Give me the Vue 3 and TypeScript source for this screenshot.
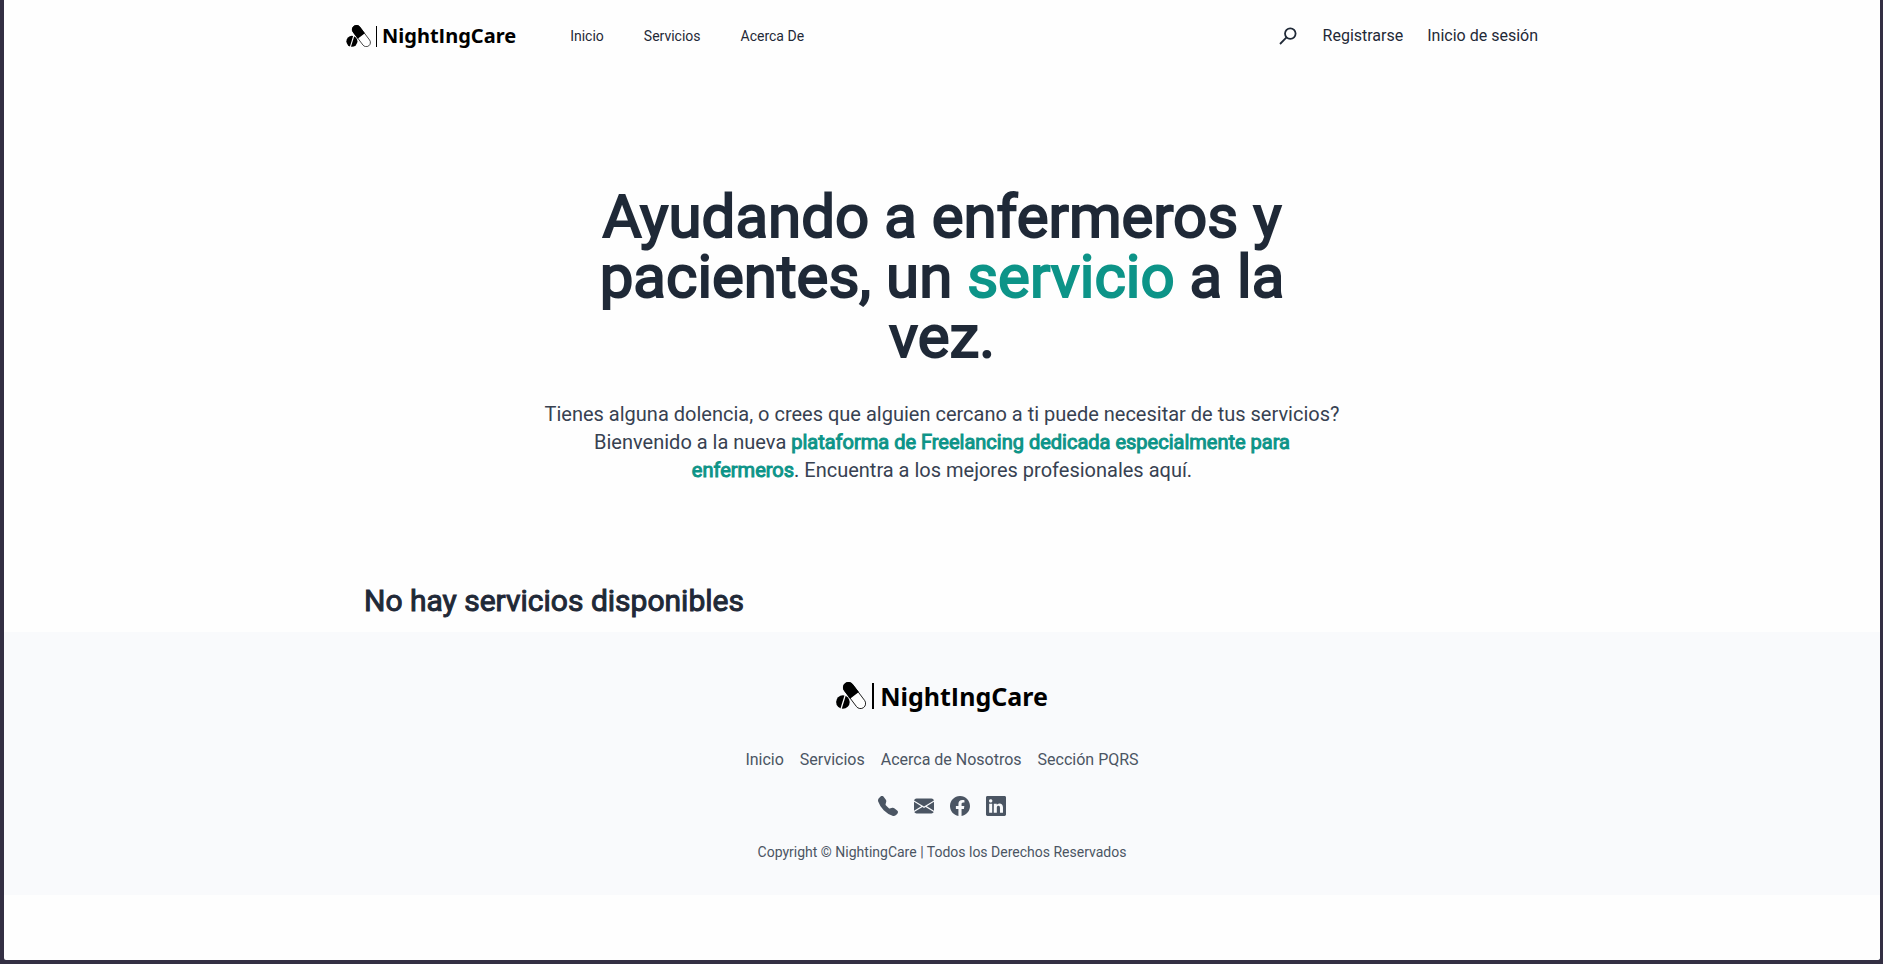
<script setup lang="ts">
interface NavLink {
  label: string
  href: string
}

interface SocialLink {
  label: string
  href: string
  path: string
}

const mainLinks: NavLink[] = [
  { label: 'Inicio', href: '#inicio' },
  { label: 'Servicios', href: '#servicios' },
  { label: 'Acerca De', href: '#acerca' },
]

const accountLinks: NavLink[] = [
  { label: 'Registrarse', href: '#registro' },
  { label: 'Inicio de sesión', href: '#sesion' },
]

const footerLinks: NavLink[] = [
  { label: 'Inicio', href: '#inicio' },
  { label: 'Servicios', href: '#servicios' },
  { label: 'Acerca de Nosotros', href: '#acerca' },
  { label: 'Sección PQRS', href: '#pqrs' },
]

const socialLinks: SocialLink[] = [
  {
    label: 'Teléfono',
    href: '#telefono',
    path: 'M1.885.511a1.745 1.745 0 0 1 2.61.163L6.29 2.98c.329.423.445.974.315 1.494l-.547 2.19a.68.68 0 0 0 .178.643l2.457 2.457a.68.68 0 0 0 .644.178l2.189-.547a1.75 1.75 0 0 1 1.494.315l2.306 1.794c.829.645.905 1.87.163 2.611l-1.034 1.034c-.74.74-1.846 1.065-2.877.702a18.6 18.6 0 0 1-7.01-4.42 18.6 18.6 0 0 1-4.42-7.009c-.362-1.03-.037-2.137.703-2.877z',
  },
  {
    label: 'Correo',
    href: '#correo',
    path: 'M.05 3.555A2 2 0 0 1 2 2h12a2 2 0 0 1 1.95 1.555L8 8.414zM0 4.697v7.104l5.803-3.558zM6.761 8.83l-6.57 4.027A2 2 0 0 0 2 14h12a2 2 0 0 0 1.808-1.144l-6.57-4.027L8 9.586zm3.436-.586L16 11.801V4.697z',
  },
  {
    label: 'Facebook',
    href: '#facebook',
    path: 'M16 8.049c0-4.446-3.582-8.05-8-8.05C3.58 0-.002 3.603-.002 8.05c0 4.017 2.926 7.347 6.75 7.951v-5.625h-2.03V8.05H6.75V6.275c0-2.017 1.195-3.131 3.022-3.131.876 0 1.791.157 1.791.157v1.98h-1.009c-.993 0-1.303.621-1.303 1.258v1.51h2.218l-.354 2.326H9.25V16c3.824-.604 6.75-3.934 6.75-7.951',
  },
  {
    label: 'LinkedIn',
    href: '#linkedin',
    path: 'M0 1.146C0 .513.526 0 1.175 0h13.65C15.474 0 16 .513 16 1.146v13.708c0 .633-.526 1.146-1.175 1.146H1.175C.526 16 0 15.487 0 14.854zm4.943 12.248V6.169H2.542v7.225zm-1.2-8.212c.837 0 1.358-.554 1.358-1.248-.015-.709-.52-1.248-1.342-1.248S2.4 3.226 2.4 3.934c0 .694.521 1.248 1.327 1.248zm4.908 8.212V9.359c0-.216.016-.432.08-.586.173-.431.568-.878 1.232-.878.869 0 1.216.662 1.216 1.634v3.865h2.401V9.25c0-2.22-1.184-3.252-2.764-3.252-1.274 0-1.845.7-2.165 1.193v.025h-.016l.016-.025V6.169h-2.4c.03.678 0 7.225 0 7.225z',
  },
]
</script>

<template>
  <div class="page">
    <header class="header">
      <a class="brand" href="#inicio">
        <svg class="brand-mark" viewBox="0 0 30 27" aria-hidden="true">
          <circle cx="6.9" cy="20" r="6.8" />
          <path d="M9.4 12.6 5 27" stroke="#fff" stroke-width="1.3" />
          <g transform="rotate(-37 18.5 13.5)">
            <rect x="13.4" y="-1.6" width="10.2" height="30.2" rx="5.1" fill="#fff" stroke="#000" stroke-width="0.8" />
            <path d="M13 13.4V3.5a5.5 5.5 0 0 1 11 0v9.9z" />
          </g>
        </svg>
        <span class="brand-bar"></span>
        <span class="brand-name">Night<span class="brand-capital">I</span>ngCare</span>
      </a>
      <nav class="main-nav" aria-label="Principal">
        <a v-for="link in mainLinks" :key="link.label" :href="link.href">{{ link.label }}</a>
      </nav>
      <div class="account">
        <button class="search" type="button" aria-label="Buscar">
          <svg viewBox="0 0 18 18" aria-hidden="true">
            <circle cx="11.3" cy="6.6" r="5.3" />
            <path d="M7.5 10.4 1 17" />
          </svg>
        </button>
        <a v-for="link in accountLinks" :key="link.label" :href="link.href">{{ link.label }}</a>
      </div>
    </header>

    <main>
      <section class="hero">
        <h1>Ayudando a enfermeros y pacientes, un <span class="accent">servicio</span> a la vez.</h1>
        <p>
          Tienes alguna dolencia, o crees que alguien cercano a ti puede necesitar de tus servicios?
          Bienvenido a la nueva
          <strong>plataforma de Freelancing dedicada especialmente para enfermeros</strong>. Encuentra a
          los mejores profesionales aquí.
        </p>
      </section>
      <section class="services">
        <h2>No hay servicios disponibles</h2>
      </section>
    </main>

    <footer class="footer">
      <a class="brand brand-large" href="#inicio">
        <svg class="brand-mark" viewBox="0 0 30 27" aria-hidden="true">
          <circle cx="6.9" cy="20" r="6.8" />
          <path d="M9.4 12.6 5 27" stroke="#fff" stroke-width="1.3" />
          <g transform="rotate(-37 18.5 13.5)">
            <rect x="13.4" y="-1.6" width="10.2" height="30.2" rx="5.1" fill="#fff" stroke="#000" stroke-width="0.8" />
            <path d="M13 13.4V3.5a5.5 5.5 0 0 1 11 0v9.9z" />
          </g>
        </svg>
        <span class="brand-bar"></span>
        <span class="brand-name">Night<span class="brand-capital">I</span>ngCare</span>
      </a>
      <nav class="footer-nav" aria-label="Pie de página">
        <a v-for="link in footerLinks" :key="link.label" :href="link.href">{{ link.label }}</a>
      </nav>
      <div class="social">
        <a v-for="item in socialLinks" :key="item.label" :href="item.href" :aria-label="item.label">
          <svg viewBox="0 0 16 16" aria-hidden="true">
            <path :d="item.path" fill-rule="evenodd" />
          </svg>
        </a>
      </div>
      <p class="copyright">Copyright © NightingCare | Todos los Derechos Reservados</p>
    </footer>
  </div>
</template>

<style>
body {
  margin: 0;
  background: #332f43;
}
</style>

<style scoped>
.page {
  box-sizing: border-box;
  min-height: 100vh;
  border: solid #332f43;
  border-width: 0 3px 4px 4px;
  border-radius: 0 0 6px 6px;
  background: #fefefe;
  color: #1f2937;
  font-family: Roboto, 'Liberation Sans', sans-serif;
  font-size: 16px;
  line-height: 24px;
}

a {
  color: inherit;
  text-decoration: none;
}

.header {
  display: flex;
  align-items: center;
  box-sizing: border-box;
  max-width: 1192px;
  height: 72px;
  margin: 0 auto;
}

.brand {
  display: flex;
  align-items: center;
  color: #000;
}

.brand-mark {
  width: 25px;
  height: 22px;
}

.brand-bar {
  width: 1px;
  height: 21px;
  margin: 0 5px 0 5px;
  background: #000;
}

.brand-name {
  font-family: 'Noto Sans', sans-serif;
  font-size: 20px;
  font-weight: 700;
  line-height: 24px;
}

.brand-capital {
  font-family: 'Open Sans', sans-serif;
}

.brand-large .brand-mark {
  width: 30px;
  height: 27px;
}

.brand-large .brand-bar {
  width: 2px;
  height: 26px;
  margin: 0 6px;
}

.brand-large .brand-name {
  font-size: 25px;
  line-height: 24px;
}

.main-nav {
  display: flex;
  gap: 40px;
  margin-left: 54px;
  font-size: 14px;
  line-height: 20px;
}

.account {
  display: flex;
  align-items: center;
  gap: 24px;
  margin-left: auto;
}

.search {
  display: flex;
  margin-right: 2px;
  padding: 0;
  border: 0;
  background: none;
  cursor: pointer;
}

.search svg {
  width: 18px;
  height: 18px;
  fill: none;
  stroke: #1f2937;
  stroke-width: 1.8;
}

.hero {
  max-width: 800px;
  margin: 0 auto;
  padding: 115px 0 99px;
  text-align: center;
}

h1,
h2,
strong {
  font-weight: 400;
  -webkit-text-stroke: 1px currentColor;
}

h1 {
  max-width: 720px;
  margin: 0 auto 33px;
  font-size: 60px;
  line-height: 60px;
  -webkit-text-stroke-width: 2px;
}

.accent {
  color: #0d9488;
}

.hero p {
  margin: 0;
  color: #374151;
  font-size: 20px;
  line-height: 28px;
}

.hero strong {
  color: #0d9488;
}

.services {
  max-width: 1156px;
  margin: 0 auto;
  padding-bottom: 13px;
}

h2 {
  margin: 0;
  font-size: 30px;
  line-height: 36px;
}

.footer {
  display: flex;
  flex-direction: column;
  align-items: center;
  padding: 50px 16px 33px;
  background: #f9fafc;
  color: #4b5563;
}

.footer-nav {
  display: flex;
  gap: 16px;
  margin-top: 39px;
}

.social {
  display: flex;
  gap: 16px;
  margin-top: 24px;
}

.social a {
  display: block;
  height: 20px;
}

.social svg {
  display: block;
  width: 20px;
  height: 20px;
  fill: currentColor;
}

.copyright {
  margin: 26px 0 0;
  font-size: 14px;
  line-height: 20px;
}
</style>
